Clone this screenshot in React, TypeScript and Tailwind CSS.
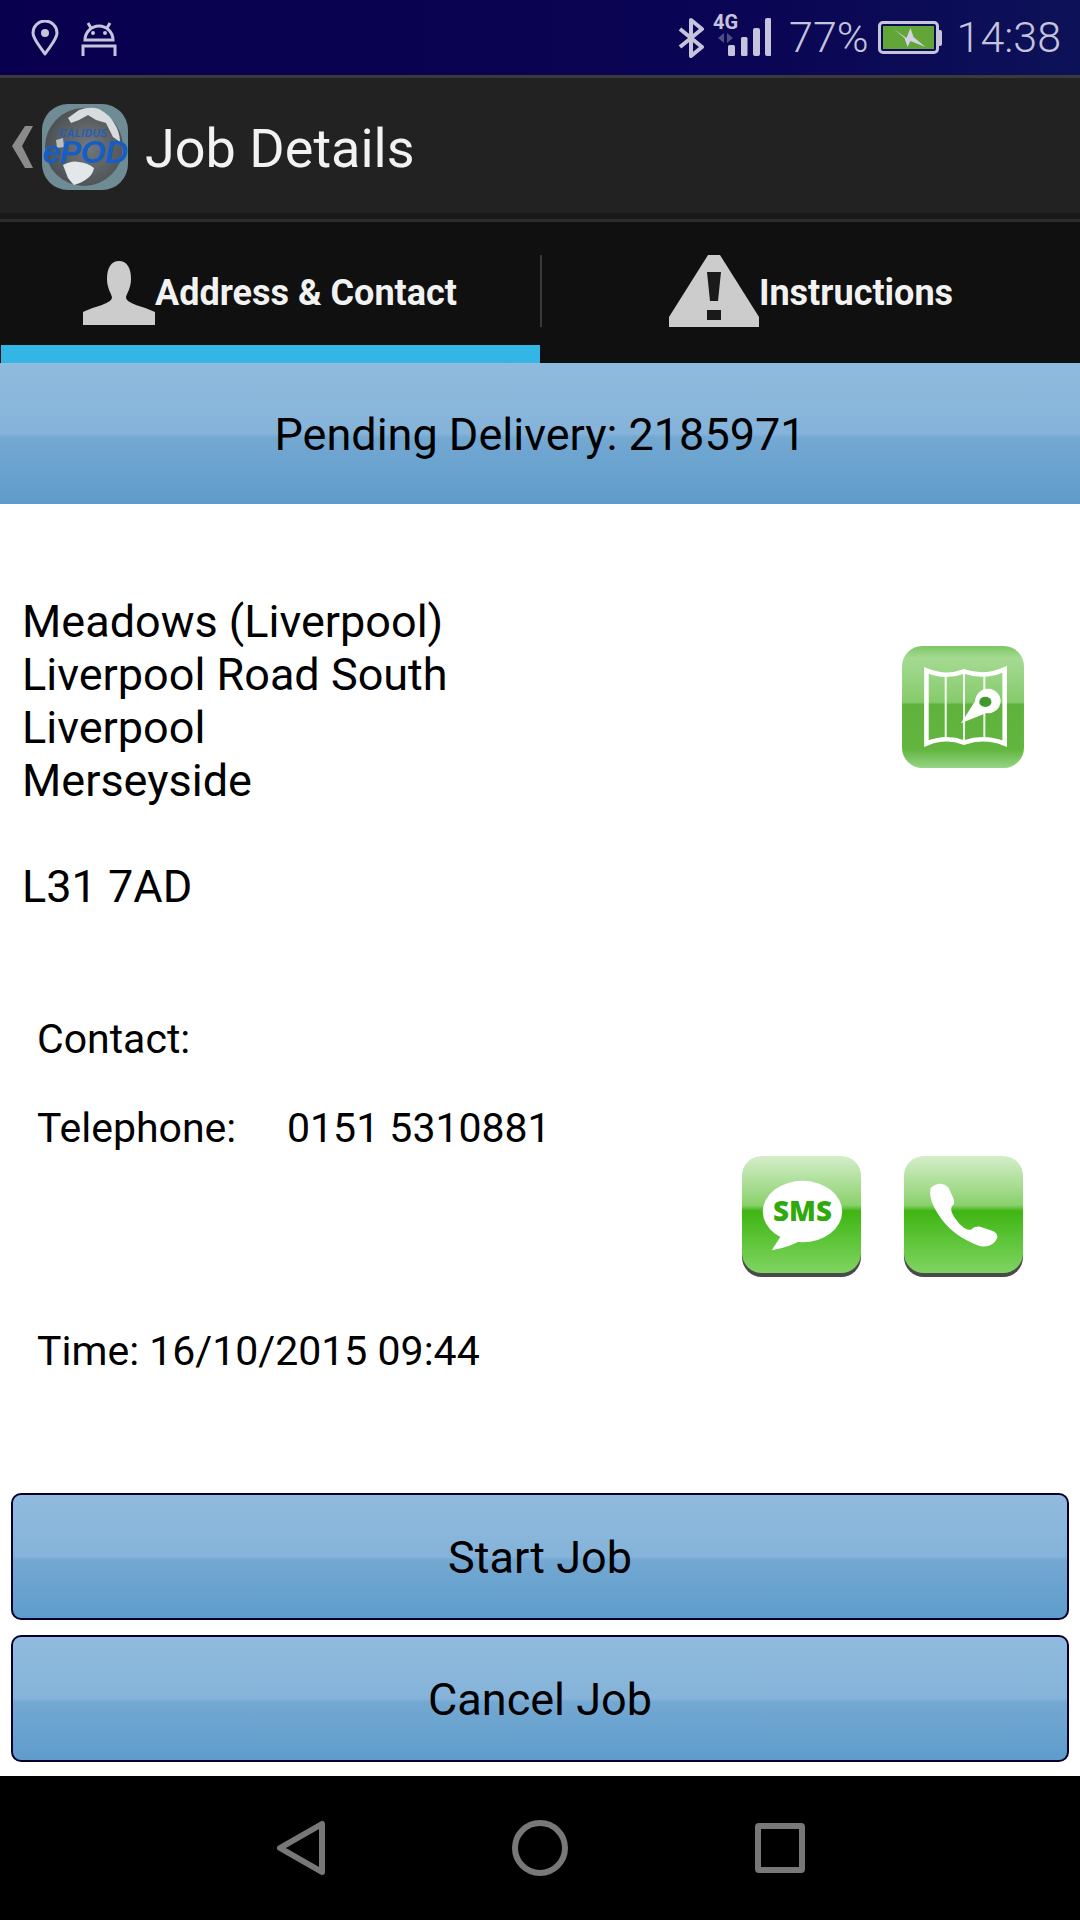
import { useId } from 'react';

const buttonGradient =
  'bg-[linear-gradient(180deg,#90bbde_0%,#85b3d9_50%,#73a8d2_53%,#5f9ccc_100%)]';

function GlossIcon({ children, map }: { children: React.ReactNode; map?: boolean }) {
  const id = useId();
  return (
    <svg viewBox="0 0 122 122" className="w-full h-full block">
      <defs>
        <linearGradient id={`${id}a`} x1="0" y1="0" x2="0" y2="1">
          {map ? (
            <>
              <stop offset="0" stopColor="#7cc765" />
              <stop offset="0.1" stopColor="#a5da92" />
              <stop offset="0.46" stopColor="#86cb6c" />
              <stop offset="0.48" stopColor="#5fb33c" />
              <stop offset="0.85" stopColor="#62b640" />
              <stop offset="1" stopColor="#96d584" />
            </>
          ) : (
            <>
              <stop offset="0" stopColor="#d5eeca" />
              <stop offset="0.42" stopColor="#8ad16c" />
              <stop offset="0.47" stopColor="#3fb513" />
              <stop offset="1" stopColor="#7fd562" />
            </>
          )}
        </linearGradient>
      </defs>
      {!map && <rect x="1" y="4" width="120" height="118" rx="20" fill="#4a4a4a" />}
      <rect x="1" y="0" width="120" height={map ? 120 : 118} rx="20" fill={`url(#${id}a)`} />
      {children}
    </svg>
  );
}

function MapIcon() {
  return (
    <GlossIcon map>
      <path
        d="M25 24 Q44 32 62 25 Q82 32 102 23 L102 96 Q82 88 62 95 Q44 88 25 96 Z"
        fill="none"
        stroke="#fff"
        strokeWidth="4.5"
      />
      <path d="M44 28 V91 M62 26 V93 M82 28 V91" stroke="#fff" strokeWidth="2" opacity="0.9" />
      <path d="M59 76 L73 54 A12.5 12 0 1 1 84 66 Z" fill="#fff" />
      <ellipse cx="83" cy="55" rx="6" ry="5" fill="#3f9a2b" />
    </GlossIcon>
  );
}

function SmsIcon() {
  return (
    <GlossIcon>
      <ellipse cx="62" cy="56" rx="40" ry="31" fill="#fff" />
      <path d="M42 78 L31 95 Q50 92 62 84 Z" fill="#fff" />
      <text
        x="62"
        y="66"
        textAnchor="middle"
        fontFamily="'Open Sans', sans-serif"
        fontWeight="800"
        fontSize="28"
        fill="#2fa90b"
      >
        SMS
      </text>
    </GlossIcon>
  );
}

function PhoneIcon() {
  return (
    <GlossIcon>
      <path
        d="M28 32 Q25 42 35 58 Q49 81 78 91 Q90 93 95 83 Q96 77 89 75 L77 71 Q71 71 69 74 Q63 76 55 66 Q47 57 49 51 Q53 48 51 43 L46 32 Q38 24 28 32 Z"
        fill="#fff"
      />
    </GlossIcon>
  );
}

function Logo() {
  return (
    <div className="w-[86px] h-[86px] shrink-0 rounded-[26px] bg-[#6f8c95] relative">
      <svg viewBox="0 0 86 86" className="absolute inset-0 w-full h-full">
        <defs>
          <radialGradient id="globe" cx="0.55" cy="0.5" r="0.6">
            <stop offset="0" stopColor="#74787b" />
            <stop offset="1" stopColor="#484d50" />
          </radialGradient>
        </defs>
        <circle cx="42" cy="43" r="39" fill="url(#globe)" />
        <path
          d="M26 14 L37 6 Q48 2 57 5 Q68 11 72 19 Q78 28 78 38 L71 33 L64 19 L54 16 L46 11 L37 16 L29 19 Z"
          fill="#d9dcde"
        />
        <path d="M14 36 L21 34 L22 43 L15 44 Z" fill="#b9bec0" />
        <path d="M21 61 Q30 56 37 58 Q46 59 52 64 Q51 70 46 74 Q40 79 32 81 Q29 78 26 74 Z" fill="#e3e7e9" />
      </svg>
      <span className="absolute left-[17px] top-[25px] font-['Liberation_Sans',sans-serif] italic font-bold text-[10px] leading-[10px] tracking-[0.6px] text-[#1f5fb8]">
        CALIDUS
      </span>
      <span className="absolute left-0 top-[35px] w-[86px] text-center font-['Liberation_Sans',sans-serif] italic font-bold text-[32px] leading-[26px] tracking-[-0.5px] text-[#175ec4] whitespace-nowrap">
        ePOD
      </span>
    </div>
  );
}

function StatusBar() {
  return (
    <div className="h-[75px] shrink-0 bg-[linear-gradient(90deg,#08004f_0%,#0a0554_70%,#0d1258_100%)] flex items-center justify-between pl-[31px] pr-[19px] text-[#c5c4dc]">
      <div className="flex items-center gap-[22px]">
        <svg width="28" height="36" viewBox="0 0 28 36" fill="none" stroke="#c5c4dc" strokeWidth="3">
          <path d="M14 34 C8 25 2 19 2 13 A12 12 0 0 1 26 13 C26 19 20 25 14 34 Z" strokeLinejoin="round" />
          <circle cx="14" cy="13" r="4" fill="#c5c4dc" stroke="none" />
        </svg>
        <svg width="36" height="36" viewBox="0 0 36 36" fill="none" stroke="#c5c4dc" strokeWidth="3">
          <path d="M4 20 A14 14 0 0 1 32 20 Z" />
          <path d="M7 3 L10 8 M29 3 L26 8" />
          <circle cx="12" cy="13" r="2" fill="#c5c4dc" stroke="none" />
          <circle cx="24" cy="13" r="2" fill="#c5c4dc" stroke="none" />
          <path d="M2 36 V26 H34 V36" />
        </svg>
      </div>
      <div className="flex items-center">
        <svg width="28" height="40" viewBox="0 0 28 40" fill="none" stroke="#c5c4dc" strokeWidth="4" className="mr-[9px]">
          <path d="M2 11 L24 29 L13 38 V2 L24 11 L2 29" strokeLinejoin="round" />
        </svg>
        <div className="relative w-[56px] h-[46px] mr-[18px]">
          <span className="absolute -left-[2px] -top-[3px] font-['Roboto',sans-serif] font-bold text-[20px] leading-[20px]">4G</span>
          <svg width="56" height="46" viewBox="0 0 56 46" className="absolute inset-0">
            <path d="M9 18 L3 23 L9 28 Z M12 18 L18 23 L12 28 Z" fill="#4f4d85" />
            <rect x="13" y="30" width="7" height="11" rx="1.5" fill="#c5c4dc" />
            <rect x="26" y="22" width="6.5" height="19" rx="1.5" fill="#c5c4dc" />
            <rect x="38" y="13" width="7" height="28" rx="2" fill="#c5c4dc" />
            <rect x="50" y="3" width="6.5" height="38" rx="2" fill="#c5c4dc" />
          </svg>
        </div>
        <span className="font-['Roboto',sans-serif] font-light text-[43px] leading-none">77%</span>
        <div className="ml-[9px] mr-[15px] flex items-center">
          <div className="w-[61px] h-[33px] rounded-[5px] border-[3px] border-[#c5c4dc] p-[2px]">
            <div className="w-full h-full bg-[#62a538] relative">
              <svg viewBox="0 0 46 23" className="absolute inset-0 w-full h-full">
                <path d="M8 3 L21 12 L25 2 L28 11 L40 21 L25 15 L22 21 L19 12 Z" fill="#d4d3e2" />
              </svg>
            </div>
          </div>
          <div className="w-[3px] h-[16px] bg-[#c5c4dc] rounded-r-[2px]" />
        </div>
        <span className="font-['Roboto',sans-serif] font-light text-[43px] leading-none">14:38</span>
      </div>
    </div>
  );
}

function ActionBar() {
  return (
    <div className="shrink-0 border-t-[3px] border-[#3a3a3a] bg-[#222222] h-[138px] flex items-center pl-[12px]">
      <svg width="22" height="42" viewBox="0 0 22 42" className="shrink-0 mr-[8px] mt-[2px]">
        <path d="M21 0 H13 L0 20 L13 42 H21 L10 20 Z" fill="#8b8b8b" />
      </svg>
      <div className="mt-[2px]">
        <Logo />
      </div>
      <h1 className="ml-[17px] mt-[7px] font-['Roboto',sans-serif] font-normal text-[54px] leading-none text-[#f2f2f2]">
        Job Details
      </h1>
    </div>
  );
}

function Tabs() {
  return (
    <div className="shrink-0 h-[150px] bg-[#101010] flex flex-col">
      <div className="h-[6px] bg-[#191919]" />
      <div className="h-[3px] bg-[#2c2c2c]" />
      <div className="flex-1 flex relative">
        <div className="w-[540px] flex items-center justify-center relative">
          <svg width="72" height="64" viewBox="0 0 72 64" className="shrink-0 blur-[0.6px]">
            <path
              d="M36 0 C44 0 48 7 48 18 C48 27 44 32 43 36 C43 43 60 45 72 51 V64 H0 V51 C12 45 29 43 29 36 C28 32 24 27 24 18 C24 7 28 0 36 0 Z"
              fill="#cccccc"
            />
          </svg>
          <span className="font-['Roboto',sans-serif] font-bold text-[36px] leading-none text-[#f2f2f2] whitespace-nowrap">
            Address &amp; Contact
          </span>
          <div className="absolute left-[1px] right-0 bottom-0 h-[18px] bg-[#33b5e5]" />
        </div>
        <div className="w-[2px] h-[72px] mt-[33px] bg-[#3a3a3a]" />
        <div className="flex-1 flex items-center justify-center">
          <svg width="90" height="72" viewBox="0 0 90 72" className="shrink-0 -mt-[4px] blur-[0.5px]">
            <path d="M39 0 H51 L90 62 V72 H0 V62 Z" fill="#cccccc" />
            <path d="M38 17 H52 L49 46 H41 Z" fill="#1a1a1a" />
            <rect x="38" y="55" width="14" height="10" fill="#1a1a1a" />
          </svg>
          <span className="font-['Roboto',sans-serif] font-bold text-[36px] leading-none text-[#f2f2f2] whitespace-nowrap">
            Instructions
          </span>
        </div>
      </div>
    </div>
  );
}

export default function App() {
  return (
    <div className="w-[1080px] h-[1920px] bg-white flex flex-col overflow-hidden font-['Roboto',sans-serif]">
      <StatusBar />
      <ActionBar />
      <Tabs />

      {/* Pending header */}
      <div className={`shrink-0 h-[141px] pt-[2px] flex items-center justify-center text-[45px] text-black ${buttonGradient}`}>
        Pending Delivery: 2185971
      </div>

      <div className="flex-1 flex flex-col text-black">
        {/* Address */}
        <div className="flex justify-between pl-[22px] pr-[55px] pt-[91px]">
          <div className="text-[45px] leading-[53px]">
            <div>Meadows (Liverpool)</div>
            <div>Liverpool Road South</div>
            <div>Liverpool</div>
            <div>Merseyside</div>
            <div className="mt-[53px]">L31 7AD</div>
          </div>
          <div className="w-[124px] h-[124px] mt-[51px]">
            <MapIcon />
          </div>
        </div>

        {/* Contact */}
        <div className="pl-[37px] pr-[56px] text-[41px] leading-[48px]">
          <div className="mt-[102px]">Contact:</div>
          <div className="mt-[41px] flex">
            <span className="w-[250px]">Telephone:</span>
            <span>0151 5310881</span>
          </div>
          <div className="mt-[4px] flex justify-end gap-[41px]">
            <div className="w-[121px] h-[121px]">
              <SmsIcon />
            </div>
            <div className="w-[121px] h-[121px]">
              <PhoneIcon />
            </div>
          </div>
          <div className="mt-[50px]">Time: 16/10/2015 09:44</div>
        </div>

        {/* Actions */}
        <div className="mt-auto px-[11px] pb-[14px] flex flex-col gap-[15px]">
          <button className={`h-[127px] pt-[2px] rounded-[10px] border-[2px] border-[#03002f] text-[45px] text-black ${buttonGradient}`}>
            Start Job
          </button>
          <button className={`h-[127px] pt-[2px] rounded-[10px] border-[2px] border-[#03002f] text-[45px] text-black ${buttonGradient}`}>
            Cancel Job
          </button>
        </div>
      </div>

      {/* Nav bar */}
      <div className="shrink-0 h-[144px] bg-black relative">
        <div className="absolute left-[276px] top-[44px]">
          <svg width="50" height="56" viewBox="0 0 50 56" fill="none" stroke="#787878" strokeWidth="6" strokeLinejoin="round">
            <path d="M46 4 V52 L4 28 Z" />
          </svg>
        </div>
        <div className="absolute left-[512px] top-[44px] w-[56px] h-[56px] rounded-full border-[6px] border-[#787878]" />
        <div className="absolute left-[755px] top-[47px] w-[50px] h-[50px] rounded-[4px] border-[6px] border-[#787878]" />
      </div>
    </div>
  );
}
